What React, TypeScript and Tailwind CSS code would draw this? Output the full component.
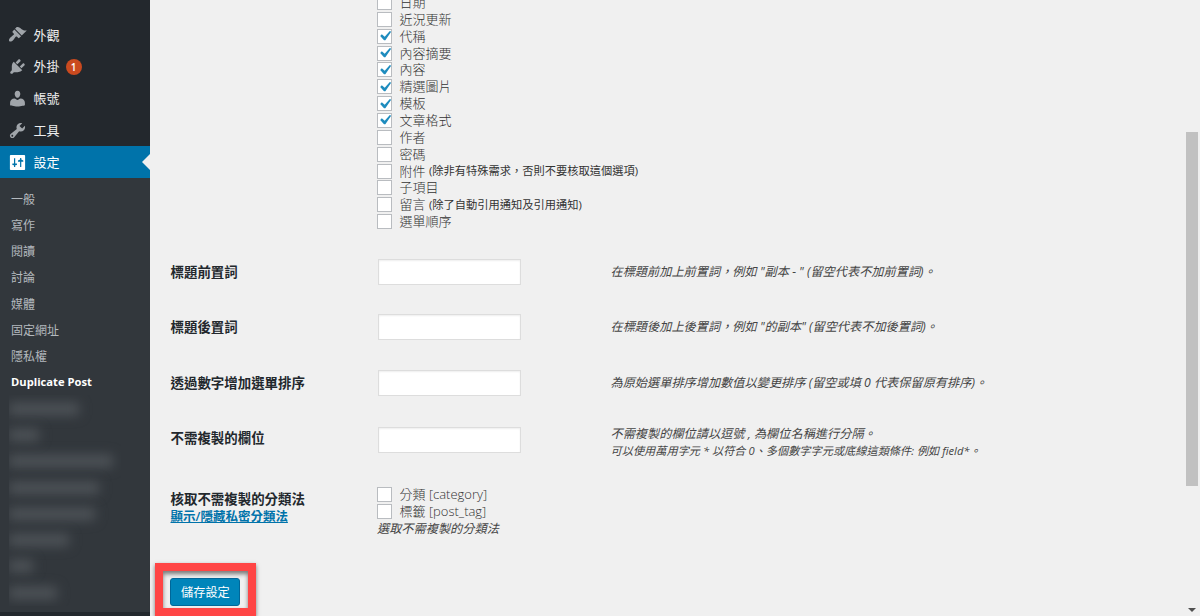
import React from "react";

const icons = {
  appearance:
    "M14.48 11.06L7.41 3.99l1.5-1.5c.5-.56 2.3-.47 3.51.32 1.21.8 1.43 1.28 2.91 2.1 1.18.64 2.45 1.26 4.45.85zm-.71.71L6.7 4.7 4.93 6.47c-.39.39-.39 1.02 0 1.41l1.06 1.06c.39.39.39 1.03 0 1.42-.6.6-1.43 1.11-2.21 1.69-.35.26-.7.53-1.01.84C1.43 14.23.4 16.08 1.4 17.07c.99 1 2.84-.03 4.18-1.36.31-.31.58-.66.85-1.02.57-.78 1.08-1.61 1.69-2.21.39-.39 1.02-.39 1.41 0l1.06 1.06c.39.39 1.02.39 1.41 0z",
  plugins:
    "M13.11 4.36L9.87 7.6 8 5.73l3.24-3.24c.35-.34 1.05-.2 1.56.32.52.51.66 1.21.31 1.55zm-8 1.77l.91-1.12 9.01 9.01-1.19.84c-.71.71-2.63 1.16-3.82 1.16H6.14L4.9 17.26c-.59.59-1.54.59-2.12 0-.59-.58-.59-1.53 0-2.12l1.24-1.24v-3.88c0-1.13.4-3.19 1.09-3.89zm7.26 3.97l3.24-3.24c.34-.35 1.04-.21 1.55.31.52.51.66 1.21.31 1.55l-3.24 3.25z",
  users:
    "M10 9.25c-2.27 0-2.9-3.44-2.9-3.44C6.8 3.8 7.7 1.8 10 1.8s3.2 2 2.9 4.01c0 0-.63 3.44-2.9 3.44zM2.2 17v-2.6c0-2.6 2-4.4 4.6-4.4 1.2 0 2.2 1.5 3.2 1.5s2-1.5 3.2-1.5c2.6 0 4.6 1.8 4.6 4.4V17s-3.8 1.3-7.8 1.3S2.2 17 2.2 17z",
  tools:
    "M16.68 9.77c-1.34 1.34-3.3 1.67-4.95.99l-5.41 6.52c-.99.99-2.59.99-3.58 0s-.99-2.59 0-3.57l6.52-5.42c-.68-1.65-.35-3.61.99-4.95 1.28-1.28 3.12-1.62 4.72-1.06l-2.89 2.89 2.82 2.82 2.86-2.87c.53 1.58.18 3.39-1.08 4.65zM3.81 16.21c.4.39 1.04.39 1.43 0 .4-.4.4-1.04 0-1.43-.39-.4-1.03-.4-1.43 0-.39.39-.39 1.03 0 1.43z",
  settings:
    "M2.8 2h14.4c.4 0 .8.4.8.8v14.4c0 .4-.4.8-.8.8H2.8c-.4 0-.8-.4-.8-.8V2.8c0-.4.4-.8.8-.8zM6.3 5.5V11H4.6v1.6l1.7.3v1.8h1.3v-1.8l1.8-.3V11H7.6V5.5zM12.7 5.2v1.6l-2.2 1v1.4h2.2v5.5H14V9.2h2.1V7.8L14 6.8V5.2z",
};

type MenuItem = { label: string; icon: keyof typeof icons; badge?: number; active?: boolean };

const menu: MenuItem[] = [
  { label: "外觀", icon: "appearance" },
  { label: "外掛", icon: "plugins", badge: 1 },
  { label: "帳號", icon: "users" },
  { label: "工具", icon: "tools" },
  { label: "設定", icon: "settings", active: true },
];

const submenu = ["一般", "寫作", "閱讀", "討論", "媒體", "固定網址", "隱私權"];

const hiddenItems = ["w-[70px]", "w-[30px]", "w-[104px]", "w-[90px]", "w-[86px]", "w-[60px]", "w-[24px]", "w-[48px]"];

const options: { label: string; note?: string; checked?: boolean }[] = [
  { label: "日期" },
  { label: "近況更新" },
  { label: "代稱", checked: true },
  { label: "內容摘要", checked: true },
  { label: "內容", checked: true },
  { label: "精選圖片", checked: true },
  { label: "模板", checked: true },
  { label: "文章格式", checked: true },
  { label: "作者" },
  { label: "密碼" },
  { label: "附件", note: "(除非有特殊需求，否則不要核取這個選項)" },
  { label: "子項目" },
  { label: "留言", note: "(除了自動引用通知及引用通知)" },
  { label: "選單順序" },
];

const fields = [
  { label: "標題前置詞", help: '在標題前加上前置詞，例如 "副本 - " (留空代表不加前置詞)。' },
  { label: "標題後置詞", help: '在標題後加上後置詞，例如 "的副本" (留空代表不加後置詞)。' },
  { label: "透過數字增加選單排序", help: "為原始選單排序增加數值以變更排序 (留空或填 0 代表保留原有排序)。" },
];

function Option({ label, note, checked }: { label: string; note?: string; checked?: boolean }) {
  return (
    <label className="flex h-[16.87px] items-center text-[13px] leading-none font-light whitespace-nowrap text-[#333]">
      <span className="mr-[7.5px] flex h-[15px] w-[15px] shrink-0 items-center justify-center border border-[#b9bcc0] bg-white">
        {checked && (
          <svg viewBox="0 0 20 20" className="h-[20px] w-[20px] shrink-0 fill-[#1e8cbe]">
            <path d="M14.83 4.89l1.34.94-5.81 8.38H9.02L5.2 9.9l1.6-1.7 2.89 2.62z" />
          </svg>
        )}
      </span>
      <span>{label}</span>
      {note && <span className="ml-[3.5px] text-[11.25px] font-normal">{note}</span>}
    </label>
  );
}

function TextInput() {
  return (
    <input
      type="text"
      className="block h-[26px] w-[143.5px] border border-[#ddd] bg-white shadow-[inset_0_1px_2px_rgba(0,0,0,0.07)] outline-none"
    />
  );
}

export default function App() {
  return (
    <div className="relative flex h-[616px] w-[1200px] overflow-hidden bg-[#f0f0f0] font-['Open_Sans','Noto_Sans_CJK_TC',sans-serif] text-[#444]">
      <aside className="flex w-[150px] shrink-0 flex-col bg-[#23282d]">
        <nav className="pt-[19px]">
          {menu.map((m) => (
            <div
              key={m.label}
              className={
                m.active
                  ? "relative flex h-[32px] items-center bg-[#0073aa] pl-[8px] text-[13px] text-white"
                  : "flex h-[31.8px] items-center pl-[8px] text-[13px] text-[#eee]"
              }
            >
              <svg
                viewBox="0 0 20 20"
                fillRule="evenodd"
                className={m.active ? "h-[19px] w-[19px] fill-white" : "h-[19px] w-[19px] fill-[#a0a5aa]"}
              >
                <path d={icons[m.icon]} />
              </svg>
              <span className="mt-px ml-[6.5px]">{m.label}</span>
              {m.badge && (
                <span className="ml-[6px] flex h-[16px] w-[16px] items-center justify-center rounded-full bg-[#ca4a1f] text-[10px] leading-none font-semibold text-white">
                  {m.badge}
                </span>
              )}
              {m.active && (
                <span className="absolute top-[8px] right-0 h-0 w-0 border-y-[8px] border-r-[8px] border-y-transparent border-r-[#f0f0f0]" />
              )}
            </div>
          ))}
        </nav>
        <div className="flex h-[434px] flex-col bg-[#32373c] pt-[8.6px]">
          {submenu.map((s) => (
            <div key={s} className="flex h-[26.2px] items-center pl-[11px] text-[12px] text-[#b4b9be]">
              {s}
            </div>
          ))}
          <div className="flex h-[25.4px] items-center pl-[11px] text-[11.2px] font-bold text-white">
            Duplicate Post
          </div>
          <div className="ml-[9px] w-[112px] overflow-hidden">
            {hiddenItems.map((w) => (
              <div key={w} className="flex h-[26.3px] items-center">
                <div className={`${w} h-[12px] bg-[#4f5459] blur-[6px]`} />
              </div>
            ))}
          </div>
        </div>
      </aside>

      <main className="flex min-w-0 flex-1 flex-col pl-[20.5px]">
        <div className="-mt-[6px] ml-[206.5px] h-[250.2px] shrink-0">
          {options.map((o) => (
            <Option key={o.label} {...o} />
          ))}
        </div>

        {fields.map((f) => (
          <div key={f.label} className="flex h-[55.4px] shrink-0 items-center whitespace-nowrap">
            <div className="w-[207px] text-[13.45px] font-semibold text-[#23282d]">{f.label}</div>
            <TextInput />
            <p className="ml-[89.5px] text-[12.2px] text-[#444] italic">{f.help}</p>
          </div>
        ))}

        <div className="flex h-[74px] shrink-0 items-start whitespace-nowrap">
          <div className="w-[207px] pt-[18px] text-[13.45px] leading-[20px] font-semibold text-[#23282d]">不需複製的欄位</div>
          <div className="pt-[17px]">
            <TextInput />
          </div>
          <div className="ml-[89.5px] pt-[15px] leading-[17px] text-[#444] italic">
            <p className="text-[12.2px] leading-[17px]">不需複製的欄位請以逗號 , 為欄位名稱進行分隔。</p>
            <p className="text-[11.2px] leading-[17px]">可以使用萬用字元 * 以符合 0、多個數字字元或底線這類條件: 例如 field*。</p>
          </div>
        </div>

        <div className="flex h-[78.8px] shrink-0 items-start whitespace-nowrap">
          <div className="w-[206.5px] pt-[7px] font-semibold">
            <div className="text-[13.45px] leading-[17px] text-[#23282d]">核取不需複製的分類法</div>
            <a className="block text-[12.5px] leading-[17px] text-[#0073aa] underline">顯示/隱藏私密分類法</a>
          </div>
          <div className="pt-[2px]">
            <Option label="分類 [category]" />
            <Option label="標籤 [post_tag]" />
            <p className="text-[12.2px] leading-[18px] text-[#444] italic">選取不需複製的分類法</p>
          </div>
        </div>

        <div className="-ml-[15.1px] flex h-[53px] w-[101px] shrink-0 items-center border-[8px] border-[#ff4545] pl-[7px] shadow-[0_2px_4px_rgba(0,0,0,0.5),inset_0_3px_4px_rgba(0,0,0,0.5)]">
          <button className="mt-[5px] h-[28px] w-[70px] rounded-[3px] border border-[#006799] bg-[#0085ba] pt-[2px] text-[12.2px] leading-none text-white">
            儲存設定
          </button>
        </div>
      </main>

      <div className="flex w-[14px] shrink-0 flex-col justify-between pt-[132px] pb-[4px]">
        <div className="h-[354px] w-[12px] bg-[#c1c1c1]" />
        <svg viewBox="0 0 8 4" className="ml-[2px] h-[4px] w-[8px] fill-[#505050]">
          <path d="M0 0h8L4 4z" />
        </svg>
      </div>
    </div>
  );
}
